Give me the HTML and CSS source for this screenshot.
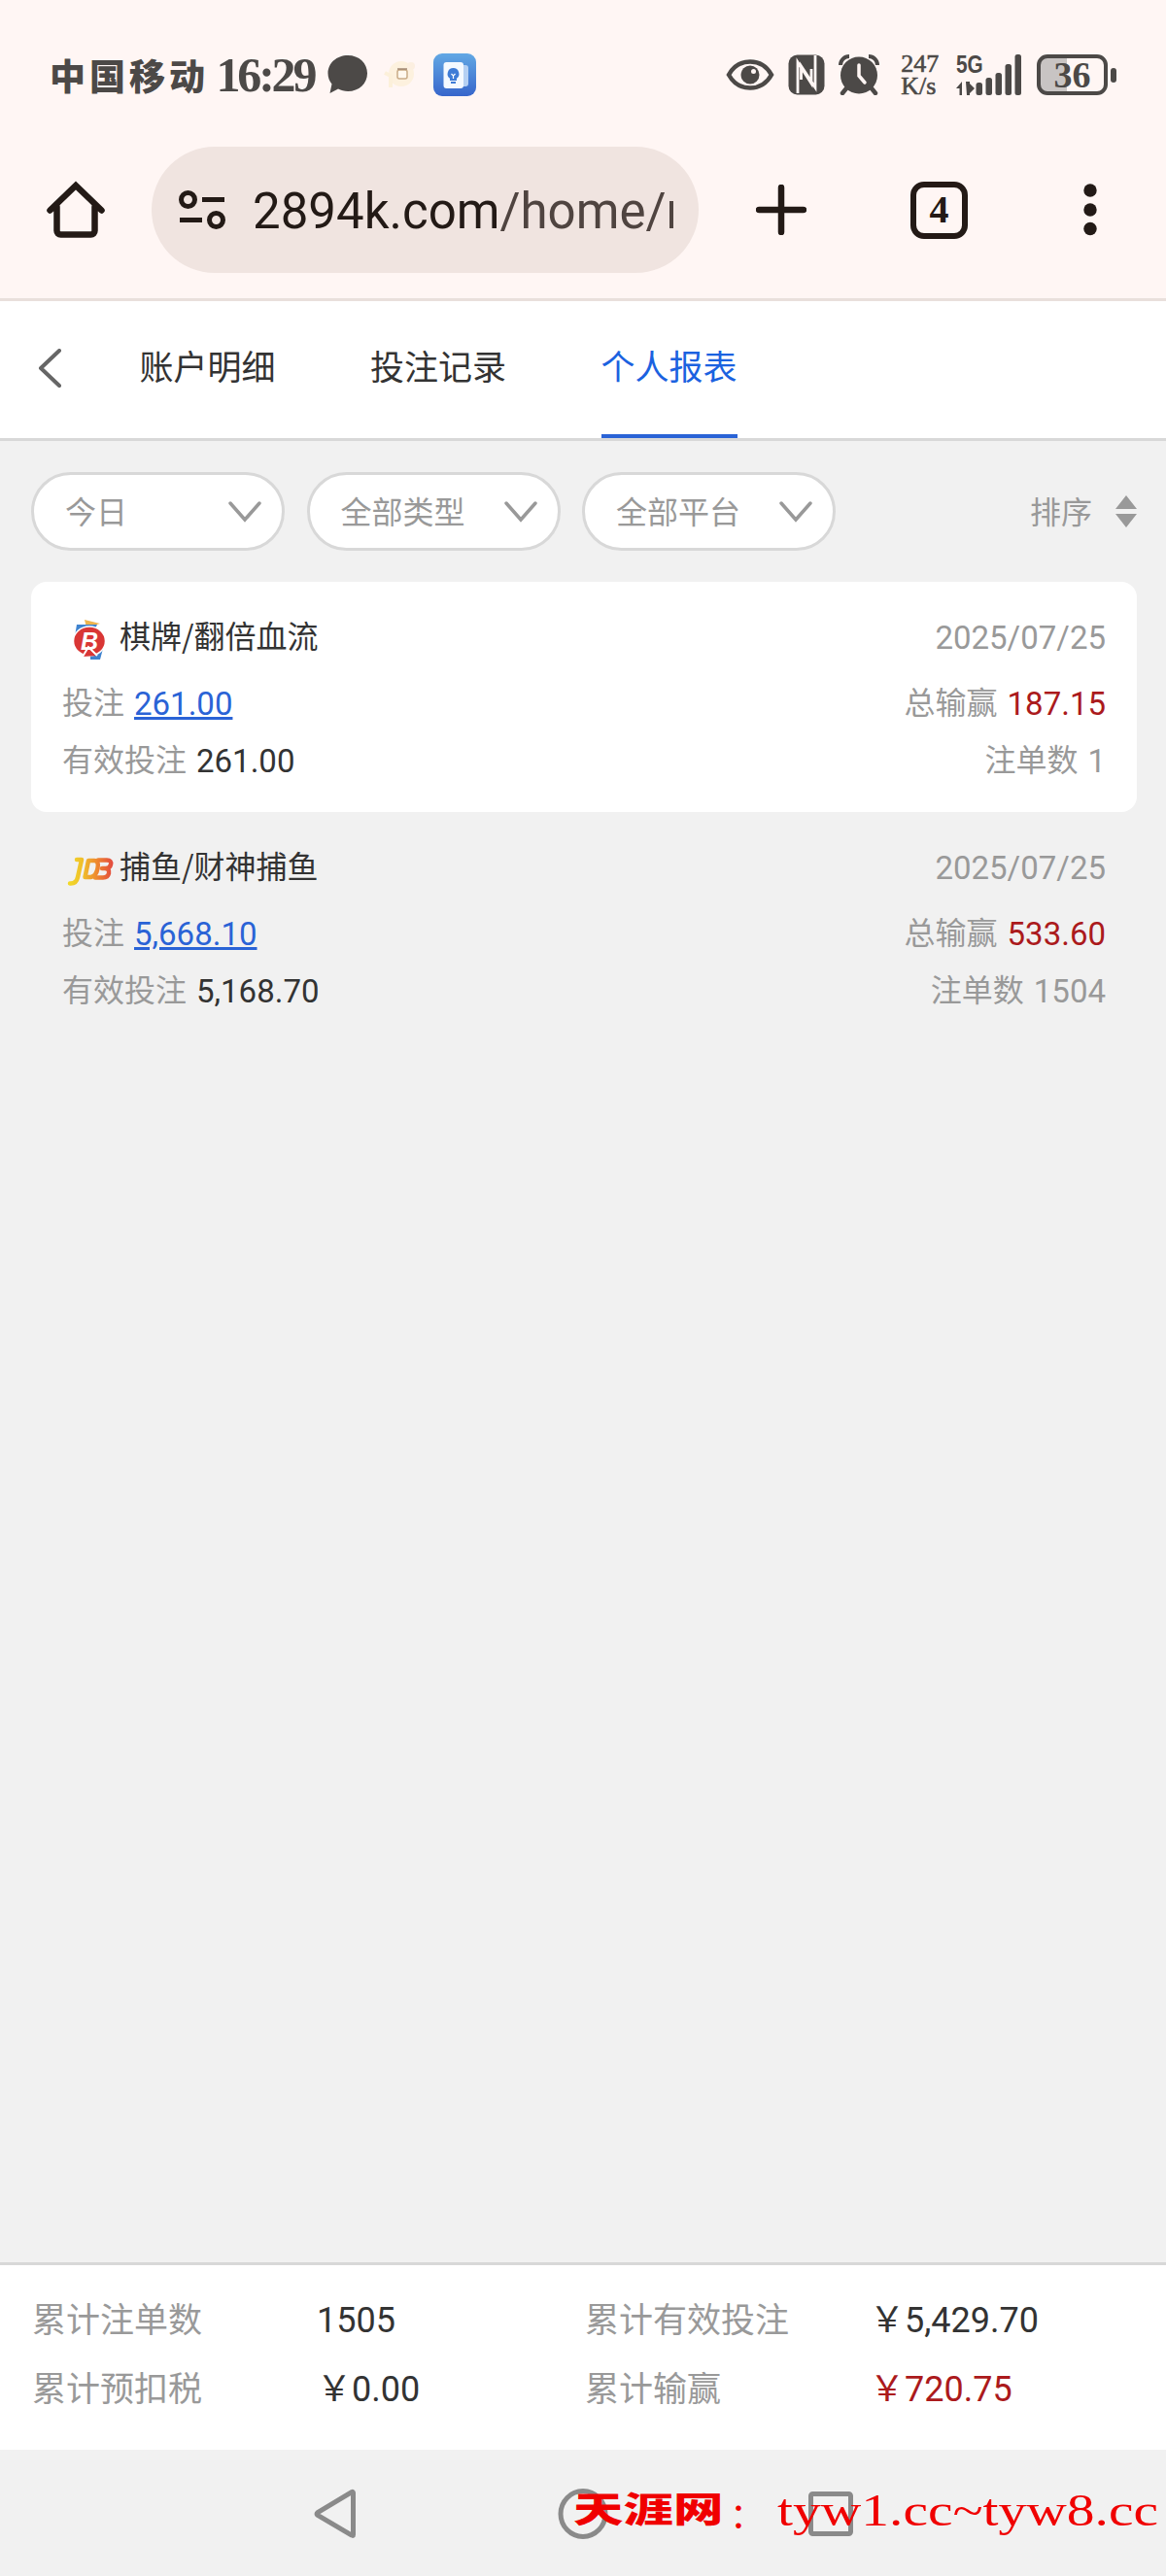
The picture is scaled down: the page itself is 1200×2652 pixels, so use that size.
FILE: index.html
```html
<!DOCTYPE html>
<html lang="zh-CN">

<head>
    <meta charset="UTF-8">
    <meta name="viewport" content="width=device-width, initial-scale=1.0">
    <title>个人报表</title>
    <link rel="stylesheet" href="styles.css">
</head>

<body>

    <header class="browser">
        <div class="status-bar">
            <span class="carrier">中国移动</span>
            <span class="time">16:29</span>
            <svg class="icon-chat" width="42" height="40" viewBox="0 0 42 40">
                <path d="M21 0C32.500 0 41 8 41 18.500S32.500 37 21 37C17.500 37 14 36 11 34.500L2.500 39L4.500 29.500C2 26.500.5 22.500.5 18.500C.5 8 9.500 0 21 0Z" />
            </svg>
            <svg class="icon-face" width="34" height="34" viewBox="0 0 34 34">
                <circle cx="18" cy="16" r="13" fill="#fdf1de" />
                <path d="M1 15l6 3v12" fill="none" stroke="#fcf0da" stroke-width="4" />
                <circle cx="28" cy="8" r="4" fill="#fcefe0" />
                <rect x="14" y="12" width="10" height="9" rx="2" fill="#fff8ee" stroke="#c9ac88" stroke-width="1.500" />
                <path d="M14 11h10" stroke="#8c6f5c" stroke-width="1.200" />
            </svg>
            <svg class="icon-app" width="44" height="44" viewBox="0 0 44 44">
                <defs>
                    <linearGradient id="app" x1="0" y1="0" x2="0" y2="1">
                        <stop offset="0" stop-color="#62a8e4" />
                        <stop offset="1" stop-color="#3766cb" />
                    </linearGradient>
                </defs>
                <rect width="44" height="44" rx="9" fill="url(#app)" />
                <rect x="24" y="12" width="12" height="22" rx="3" fill="#b5d0f3" />
                <rect x="10.500" y="9" width="20.500" height="27" rx="3" fill="#f4f9ff" />
                <path d="M20.500 15a6 6 0 0 1 3.500 10.800V28h-7v-2.200A6 6 0 0 1 20.500 15Z" fill="#3f7cd6" />
                <path d="M18.500 21l2 2 2-2M20.500 23v3" fill="none" stroke="#fff" stroke-width="1.200" />
                <path d="M18 30h5" stroke="#3f7cd6" stroke-width="2" />
            </svg>

            <svg class="icon-eye" width="50" height="34" viewBox="0 0 50 34">
                <path d="M3 17C8 8 16 3.500 25 3.500S42 8 47 17C42 26 34 30.500 25 30.500S8 26 3 17Z" fill="none" stroke="#4c4947" stroke-width="4.500" />
                <circle cx="25" cy="17" r="9.500" />
                <circle cx="28.500" cy="13.500" r="2.500" fill="#fff6f4" />
            </svg>
            <svg class="icon-nfc" width="38" height="42" viewBox="0 0 38 42">
                <rect x=".5" y=".5" width="37" height="41" rx="9" />
                <path d="M10 40V8l14 22V15M28 1v33L13.500 12v14" fill="none" stroke="#fff6f4" stroke-width="2.800" />
            </svg>
            <svg class="icon-alarm" width="42" height="42" viewBox="0 0 42 42">
                <path d="M2 11A9 9 0 0 1 11 2M40 11A9 9 0 0 0 31 2" fill="none" stroke="#4c4947" stroke-width="4" />
                <path d="M8 35l-4 5M34 35l4 5" stroke="#4c4947" stroke-width="4.500" stroke-linecap="round" />
                <circle cx="21" cy="21.500" r="19" />
                <path d="M21 11v11l6 7" fill="none" stroke="#fff6f4" stroke-width="3.500" stroke-linecap="round" />
            </svg>
            <div class="speed"><span>247</span><span>K/s</span></div>
            <div class="signal">
                <span class="network">5G</span>
                <svg width="68" height="42" viewBox="0 0 68 42">
                    <path d="M0 35l6-7v14h-2.500v-7zM10 28l4 0v14l-3 0zM12 28l7 7-5 5z" />
                    <rect x="20.500" y="29" width="6.500" height="13" rx="2.500" />
                    <rect x="30.500" y="24" width="6.500" height="18" rx="2.500" />
                    <rect x="40.500" y="19" width="6.500" height="23" rx="2.500" />
                    <rect x="50.500" y="10" width="6.500" height="32" rx="2.500" />
                    <rect x="60.500" y="0" width="6.500" height="42" rx="2.500" />
                </svg>
            </div>
            <div class="battery"><span>36</span></div>
            <i class="battery-tip"></i>
        </div>

        <div class="toolbar">
            <svg class="icon-home" width="60" height="60" viewBox="0 0 60 60">
                <path d="M10.500 27V51.500a4 4 0 0 0 4 4h31a4 4 0 0 0 4-4V27M3.500 30.500L30 5L56.500 30.500" fill="none" stroke="#231a16" stroke-width="6.500" stroke-linecap="round" />
            </svg>
            <div class="address">
                <svg width="48" height="42" viewBox="0 0 48 42" fill="none" stroke="#231a16" stroke-width="5">
                    <circle cx="9.500" cy="10.500" r="7" />
                    <circle cx="38.500" cy="31.500" r="7" />
                    <path d="M24 10.500h23M1 31.500h23" />
                </svg>
                <div class="url">2894k.com<span>/home/r</span></div>
            </div>
            <svg class="icon-plus" width="52" height="52" viewBox="0 0 52 52">
                <path d="M26 3v46M3 26h46" stroke="#231a16" stroke-width="6.500" stroke-linecap="round" />
            </svg>
            <div class="tab-count">4</div>
            <svg class="icon-more" width="14" height="54" viewBox="0 0 14 54">
                <circle cx="7" cy="7" r="6.700" />
                <circle cx="7" cy="27" r="6.700" />
                <circle cx="7" cy="46.500" r="6.700" />
            </svg>
        </div>
    </header>

    <nav class="tabs">
        <svg class="icon-back" width="25" height="40" viewBox="0 0 25 40">
            <path d="M22 2L3 20L22 38" fill="none" stroke="#666" stroke-width="4" stroke-linecap="round" stroke-linejoin="round" />
        </svg>
        <a class="tab">账户明细</a>
        <a class="tab">投注记录</a>
        <a class="tab active">个人报表</a>
    </nav>

    <main class="report">
        <div class="filters">
            <div class="select"><span>今日</span>
                <svg width="34" height="22" viewBox="0 0 34 22"><path d="M2 2L17 19L32 2" /></svg>
            </div>
            <div class="select"><span>全部类型</span>
                <svg width="34" height="22" viewBox="0 0 34 22"><path d="M2 2L17 19L32 2" /></svg>
            </div>
            <div class="select"><span>全部平台</span>
                <svg width="34" height="22" viewBox="0 0 34 22"><path d="M2 2L17 19L32 2" /></svg>
            </div>
            <div class="sort"><span>排序</span>
                <svg width="22" height="33" viewBox="0 0 22 33"><path d="M11 0L22 14H0ZM0 19H22L11 33Z" fill="#999" /></svg>
            </div>
        </div>

        <section class="card white">
            <div class="row title">
                <svg class="logo" width="50" height="44" viewBox="0 0 50 44">
                    <path d="M18 1l16 4-14 4z" fill="#eeb44e" />
                    <path d="M10 6h21l-6 12H8z" fill="#3f83cf" />
                    <path d="M24 36l14-9-4 15h-10z" fill="#3f83cf" />
                    <ellipse cx="23" cy="23" rx="16.500" ry="15" fill="#d93635" stroke="#fff" stroke-width="1.500" />
                    <path d="M16 39l6-10 9 9" fill="#d93635" stroke="#fff" stroke-width="2" />
                    <text x="14" y="32" font-size="25">B</text>
                </svg>
                <span class="name">棋牌/翻倍血流</span>
                <span class="date">2025/07/25</span>
            </div>
            <div class="row">
                <label>投注</label><a class="num">261.00</a>
                <label class="right">总输赢</label><span class="num red">187.15</span>
            </div>
            <div class="row">
                <label>有效投注</label><span class="num">261.00</span>
                <label class="right">注单数</label><span class="num gray">1</span>
            </div>
        </section>

        <section class="card">
            <div class="row title">
                <svg class="logo" width="50" height="44" viewBox="0 0 50 44">
                    <defs>
                        <linearGradient id="jdb" gradientUnits="userSpaceOnUse" x1="0" y1="0" x2="48" y2="0">
                            <stop offset="0" stop-color="#f2dc28" />
                            <stop offset=".35" stop-color="#efbd2c" />
                            <stop offset=".65" stop-color="#ee8630" />
                            <stop offset="1" stop-color="#e24740" />
                        </linearGradient>
                    </defs>
                    <g fill="none" stroke="url(#jdb)" stroke-width="4.500" stroke-linejoin="round" stroke-linecap="round">
                        <path d="M10 12h5L11 30Q9.500 37 3 36.500" />
                        <path d="M22 13h6q5 0 3.500 8t-7 9h-6z" />
                        <path d="M32 12.500h9q5 0 4 4.500t-6 4h-3M39 21q5 .5 4 5t-6 4.500h-8" />
                    </g>
                </svg>
                <span class="name">捕鱼/财神捕鱼</span>
                <span class="date">2025/07/25</span>
            </div>
            <div class="row">
                <label>投注</label><a class="num">5,668.10</a>
                <label class="right">总输赢</label><span class="num red">533.60</span>
            </div>
            <div class="row">
                <label>有效投注</label><span class="num">5,168.70</span>
                <label class="right">注单数</label><span class="num gray">1504</span>
            </div>
        </section>
    </main>

    <footer class="summary">
        <label>累计注单数</label><span>1505</span>
        <label>累计有效投注</label><span>￥5,429.70</span>
        <label>累计预扣税</label><span>￥0.00</span>
        <label>累计输赢</label><span class="red">￥720.75</span>
    </footer>

    <div class="system-nav">
        <svg width="46" height="54" viewBox="0 0 46 54"><path d="M41.500 5.500V48.500Q41.500 50 40 49L5 28.500Q3 27 5 25.500L40 4.500Q41.500 4 41.500 5.500Z" /></svg>
        <svg width="52" height="54" viewBox="0 0 52 54"><ellipse cx="26" cy="27" rx="23" ry="23.500" /></svg>
        <svg width="46" height="46" viewBox="0 0 46 46"><rect x="2.500" y="2.500" width="41" height="41" rx="2" /></svg>
        <div class="watermark"><b>天涯网</b><i>：</i><span>tyw1.cc~tyw8.cc</span></div>
    </div>

</body>

</html>
```
FILE: styles.css
```css
* {
    box-sizing: border-box;
}

body {
    width: 1200px;
    height: 2652px;
    margin: 0;
    display: flex;
    flex-direction: column;
    overflow: hidden;
    background: #f1f1f1;
    color: #333;
    font-family: Roboto, "Noto Sans CJK SC", sans-serif;
    font-size: 32px;
}

svg {
    flex: none;
    display: block;
}

/* 浏览器顶部 */
.browser {
    height: 310px;
    background: #fff6f4;
    border-bottom: 3px solid #e9dfdb;
}

.status-bar {
    height: 100px;
    padding: 54px 51px 0 51px;
    display: flex;
    align-items: center;
    color: #4c4947;
    fill: #4c4947;
    font-family: "Liberation Serif", "Noto Sans CJK SC", serif;
    font-weight: bold;
    white-space: nowrap;
}

.carrier {
    width: 172px;
    font-family: "Noto Sans CJK SC", sans-serif;
    font-size: 37px;
    font-weight: 900;
    letter-spacing: 4px;
    line-height: 46px;
}

.time {
    width: 115px;
    font-size: 50px;
    letter-spacing: -3.2px;
    line-height: 48px;
}

.icon-face {
    margin-left: 16px;
}

.icon-app {
    margin-left: 17px;
}

.icon-eye {
    margin-left: 257px;
}

.icon-nfc {
    margin-left: 14px;
}

.icon-alarm {
    margin-left: 14px;
}

.speed {
    width: 42px;
    margin-left: 22px;
    display: flex;
    flex-direction: column;
    font-size: 26px;
    font-weight: normal;
    line-height: 23px;
    -webkit-text-stroke: 0.6px #4c4947;
}

.signal {
    position: relative;
    margin-left: 15px;
}

.network {
    position: absolute;
    left: 0;
    top: -3px;
    font-family: "Liberation Sans", sans-serif;
    font-size: 26px;
    line-height: 26px;
    transform: scaleX(0.8);
    transform-origin: left;
}

.battery {
    width: 73px;
    height: 42px;
    margin-left: 15px;
    border: 4px solid #4c4947;
    border-radius: 11px;
    background: linear-gradient(90deg, #c8c4c3 27px, transparent 27px);
    font-size: 38px;
    line-height: 34px;
    text-align: center;
}

.battery-tip {
    width: 6px;
    height: 15px;
    margin-left: 3px;
    border-radius: 3px;
    background: #4c4947;
}

.toolbar {
    height: 207px;
    padding: 51px 0 26px 48px;
    display: flex;
    align-items: center;
    fill: #231a16;
}

.address {
    width: 563px;
    height: 130px;
    margin-left: 48px;
    padding-left: 28px;
    display: flex;
    align-items: center;
    border-radius: 65px;
    background: #f0e4e0;
}

.url {
    width: 433px;
    margin-left: 28px;
    padding-top: 3px;
    overflow: hidden;
    color: #231a16;
    font-size: 51px;
    line-height: 70px;
    white-space: nowrap;
}

.url span {
    color: #4f4440;
}

.icon-plus {
    margin-left: 59px;
}

.tab-count {
    width: 59px;
    height: 59px;
    margin-left: 107px;
    border: 6px solid #231a16;
    border-radius: 14px;
    color: #231a16;
    font: bold 40px/46px "Liberation Serif", serif;
    text-align: center;
}

.icon-more {
    margin-left: 119px;
}

/* 页签 */
.tabs {
    height: 144px;
    padding-left: 39px;
    display: flex;
    gap: 97.5px;
    background: #fff;
    border-bottom: 3px solid #d8d8d8;
}

.icon-back {
    margin: 49px -18px 0 0;
}

.tab {
    height: 141px;
    font-size: 35px;
    line-height: 139px;
}

.tab.active {
    color: #1b62e0;
    background: linear-gradient(#2a63d6, #2a63d6) bottom / 100% 4px no-repeat;
}

/* 筛选 */
.report {
    flex: 1;
    padding: 32px 30px 0 32px;
}

.filters {
    height: 81px;
    margin-bottom: 32px;
    display: flex;
    gap: 22.5px;
    color: #999;
}

.filters span {
    padding-bottom: 3px;
}

.select {
    width: 261px;
    padding: 0 21px 0 32px;
    display: flex;
    align-items: center;
    justify-content: space-between;
    border: 3px solid #d8d8d8;
    border-radius: 41px;
    background: #fff;
}

.select path {
    fill: none;
    stroke: #999;
    stroke-width: 3.5;
    stroke-linecap: round;
}

.sort {
    margin-left: auto;
    display: flex;
    align-items: center;
    gap: 24px;
}

/* 报表卡片 */
.card {
    height: 236.5px;
    padding: 23px 32px 0;
    border-radius: 16px;
}

.card.white {
    background: #fff;
}

.row {
    height: 59px;
    display: flex;
    align-items: center;
    line-height: 59px;
}

.title {
    height: 73px;
    padding-bottom: 4px;
}

.logo {
    margin: 4px 8px 0 5px;
    width: 50px;
}

.logo text {
    fill: #fff;
    font-family: "Liberation Sans", sans-serif;
    font-weight: bold;
    font-style: italic;
}

.name {
    margin-top: -6px;
    margin-left: -4px;
    font-family: "Noto Sans CJK SC", sans-serif;
}

.date {
    margin-left: auto;
    color: #999;
    font-size: 33px;
}

.row label,
.gray {
    color: #999;
}

.right {
    margin-left: auto;
}

.num {
    margin-left: 10px;
    font-size: 33px;
}

a.num {
    color: #2a63d6;
    text-decoration: underline;
    text-decoration-thickness: 3px;
    text-underline-offset: 2px;
}

.red,
.num.red {
    color: #ab1a1c;
}

.num.gray {
    color: #999;
}

/* 底部合计 */
.summary {
    height: 193px;
    padding: 22px 0 0 33px;
    display: grid;
    grid-template-columns: 293px 276px 293px auto;
    grid-auto-rows: 71px;
    background: #fff;
    border-top: 3px solid #d8d8d8;
    font-size: 35px;
    line-height: 71px;
}

.summary label {
    color: #999;
}

.summary span {
    font-size: 36px;
}

/* 系统导航 */
.system-nav {
    position: relative;
    height: 130px;
    padding: 2px 322px 0;
    display: flex;
    align-items: center;
    justify-content: space-between;
    fill: none;
    stroke: #8a8a8a;
    stroke-width: 5;
}

.watermark {
    position: absolute;
    left: 590px;
    top: 37px;
    display: flex;
    color: #f00000;
    line-height: 50px;
    white-space: nowrap;
}

.watermark b {
    width: 161px;
    font-family: "Noto Sans CJK SC", sans-serif;
    font-size: 36px;
    font-weight: 900;
    line-height: 44px;
    transform: scaleX(1.43);
    transform-origin: left;
}

.watermark i {
    width: 49px;
    font-style: normal;
    font-size: 36px;
    line-height: 64px;
}

.watermark span {
    font-family: "Liberation Serif", serif;
    font-size: 46px;
    line-height: 52px;
    transform: scaleX(1.25);
    transform-origin: left;
}
```
